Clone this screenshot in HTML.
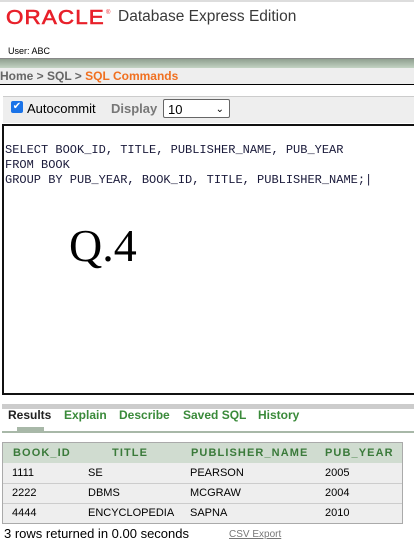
<!DOCTYPE html>
<html><head><style>
body{margin:0;width:414px;height:559px;overflow:hidden;background:#fff;font-family:"Liberation Sans",Arial,sans-serif;position:relative}
.a{position:absolute}
</style></head><body>
<div class="a" style="left:0;top:0;width:414px;height:2px;background:#ddd"></div>
<div class="a" style="left:6px;top:7px;font-size:20px;color:#e8202a;letter-spacing:1px;-webkit-text-stroke:0.6px #e8202a;transform:scaleX(1.12);transform-origin:left">ORACLE</div>
<div class="a" style="left:106px;top:10px;font-size:6px;color:#e8202a">®</div>
<div class="a" style="left:118px;top:8px;font-size:15.5px;color:#3a3a3a">Database Express Edition</div>
<div class="a" style="left:8px;top:46px;font-size:9px;color:#000">User: ABC</div>
<div class="a" style="left:0;top:58px;width:414px;height:10px;background:linear-gradient(#8f9f8f,#c8d8c8);border-top:1px solid #888"></div>
<div class="a" style="left:0;top:68px;width:414px;height:16px;background:#eee;border-bottom:1px solid #000;font-size:12px;font-weight:bold;color:#666;line-height:16px">Home &gt; SQL &gt; <span style="color:#f07020">SQL Commands</span></div>
<div class="a" style="left:3px;top:96px;width:411px;height:26px;background:#eee;border-top:1px solid #ccc"></div>
<div class="a" style="left:11px;top:101px;width:12px;height:12px;background:#1a73e8;border-radius:2px;color:#fff;font-size:10px;line-height:12px;text-align:center">✔</div>
<div class="a" style="left:27px;top:101px;font-size:13px;color:#000">Autocommit</div>
<div class="a" style="left:111px;top:101px;font-size:13px;font-weight:bold;color:#777">Display</div>
<div class="a" style="left:163px;top:99px;width:67px;height:19px;border:1px solid #666;border-radius:2px;background:#fff;font-size:13px;line-height:19px;box-sizing:border-box;padding-left:4px">10<span style="position:absolute;right:5px;top:0;font-size:10px">⌄</span></div>
<div class="a" style="left:2px;top:124px;width:414px;height:271px;border:2px solid #111;box-sizing:border-box;background:#fff"></div>
<pre class="a" style="left:5px;top:143px;margin:0;font-family:'Liberation Mono',monospace;font-size:12px;line-height:15px;color:#1a1a3a">SELECT BOOK_ID, TITLE, PUBLISHER_NAME, PUB_YEAR
FROM BOOK
GROUP BY PUB_YEAR, BOOK_ID, TITLE, PUBLISHER_NAME;|</pre>
<div class="a" style="left:69px;top:219px;font-family:'Liberation Serif',serif;font-size:46px;color:#000">Q.4</div>
<div class="a" style="left:2px;top:404px;width:412px;height:5px;background:#ccc"></div>
<div class="a" style="left:8px;top:408px;font-size:12px;font-weight:bold;color:#222">Results</div>
<div class="a" style="left:64px;top:408px;font-size:12px;font-weight:bold;color:#3a8a3a">Explain</div>
<div class="a" style="left:119px;top:408px;font-size:12px;font-weight:bold;color:#3a8a3a">Describe</div>
<div class="a" style="left:183px;top:408px;font-size:12px;font-weight:bold;color:#3a8a3a">Saved SQL</div>
<div class="a" style="left:258px;top:408px;font-size:12px;font-weight:bold;color:#3a8a3a">History</div>
<div class="a" style="left:17px;top:427px;width:27px;height:4px;background:#a8b8a8"></div>
<div class="a" style="left:2px;top:431px;width:412px;height:2px;background:#a8b8a8"></div>
<div class="a" style="left:2px;top:442px;width:401px;height:82px;border:1px solid #aaa;box-sizing:border-box;background:#eee"></div>
<div class="a" style="left:3px;top:443px;width:399px;height:20px;background:#d0dcd0;font-size:11px;font-weight:bold;color:#3a7a3a;letter-spacing:1.1px;line-height:20px">
<span class="a" style="left:10px">BOOK_ID</span><span class="a" style="left:109px">TITLE</span><span class="a" style="left:188px">PUBLISHER_NAME</span><span class="a" style="left:322px">PUB_YEAR</span></div>
<div class="a" style="left:3px;top:463px;width:399px;height:20px;border-bottom:1px solid #ccc;font-size:11px;line-height:20px">
<span class="a" style="left:9px">1111</span><span class="a" style="left:85px">SE</span><span class="a" style="left:187px">PEARSON</span><span class="a" style="left:322px">2005</span></div>
<div class="a" style="left:3px;top:484px;width:399px;height:19px;border-bottom:1px solid #ccc;font-size:11px;line-height:19px">
<span class="a" style="left:9px">2222</span><span class="a" style="left:85px">DBMS</span><span class="a" style="left:187px">MCGRAW</span><span class="a" style="left:322px">2004</span></div>
<div class="a" style="left:3px;top:504px;width:399px;height:19px;font-size:11px;line-height:19px">
<span class="a" style="left:9px">4444</span><span class="a" style="left:85px">ENCYCLOPEDIA</span><span class="a" style="left:187px">SAPNA</span><span class="a" style="left:322px">2010</span></div>
<div class="a" style="left:4px;top:526px;font-size:13px;color:#000">3 rows returned in 0.00 seconds</div>
<div class="a" style="left:229px;top:529px;font-size:10px;color:#777;text-decoration:underline">CSV Export</div>
</body></html>
